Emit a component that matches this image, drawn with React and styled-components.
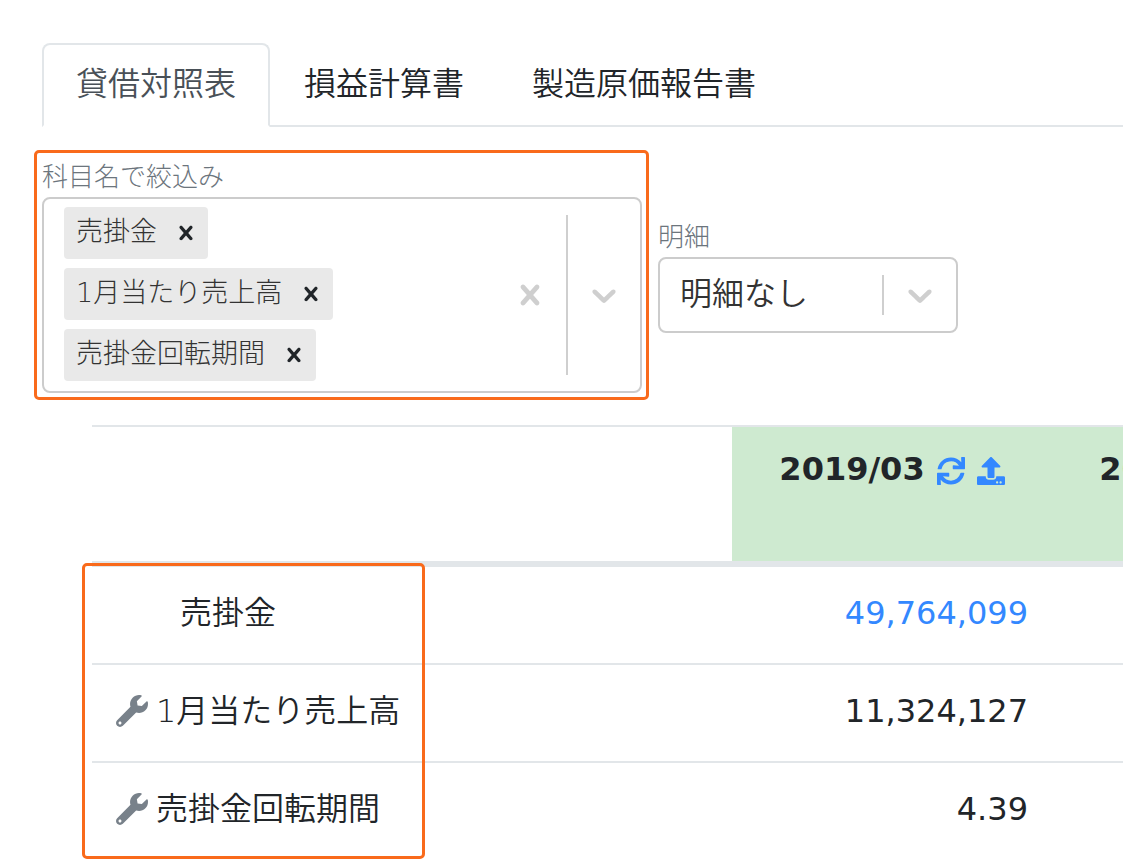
import React, { useState } from 'react';
import styled, { createGlobalStyle } from 'styled-components';
import { FaSync, FaUpload, FaWrench } from 'react-icons/fa';

const GlobalStyle = createGlobalStyle`
  *, *::before, *::after {
    box-sizing: border-box;
  }

  body {
    margin: 0;
    background: #ffffff;
    color: #212529;
    font-family: 'DejaVu Sans', 'Noto Sans CJK JP', sans-serif;
    font-size: 32px;
    font-weight: 350;
    line-height: 48px;
  }

  button, input, select {
    font: inherit;
    color: inherit;
  }
`;

const Page = styled.main`
  padding-top: 43px;
  overflow: hidden;
`;

const TabList = styled.div`
  display: flex;
  margin: 0 0 32px 42px;
  box-shadow: inset 0 -2px 0 #e2e6e9;
`;

const Tab = styled.button`
  height: 84px;
  padding: 0 32px 2px;
  border: 2px solid ${props => (props.$active ? '#e2e6e9' : 'transparent')};
  border-bottom-color: ${props => (props.$active ? '#ffffff' : 'transparent')};
  border-radius: 8px 8px 0 0;
  background: ${props => (props.$active ? '#ffffff' : 'transparent')};
  color: ${props => (props.$active ? '#495057' : '#212529')};
  white-space: nowrap;
  cursor: pointer;
`;

const Filters = styled.div`
  display: flex;
  align-items: center;
  gap: 16px;
  margin-bottom: 32px;
  padding-left: 42px;
`;

const Field = styled.div`
  position: relative;
  flex: 0 1 ${props => props.$width};
  min-width: 0;
`;

const FieldLabel = styled.label`
  display: block;
  padding-bottom: 2px;
  color: #6c757d;
  font-size: 26px;
  font-weight: 300;
  line-height: 36px;
`;

const Control = styled.div`
  position: relative;
  display: flex;
  border: 2px solid #cccccc;
  border-radius: 8px;
  background: #ffffff;
`;

const Values = styled.div`
  display: flex;
  flex: 1;
  align-items: flex-end;
  min-width: 0;
  padding: 8px 0 10px 20px;
`;

const TagList = styled.ul`
  display: flex;
  flex-direction: column;
  align-items: flex-start;
  gap: 9px;
  margin: 0;
  padding: 0;
  list-style: none;
`;

const Tag = styled.li`
  display: flex;
  height: 52px;
  border-radius: 4px;
  background: #e9e9e9;
  color: #333333;
  font-size: 27px;
  font-weight: 300;
  line-height: 50px;
  white-space: nowrap;
`;

const TagText = styled.span`
  padding: 0 6px 0 12px;
`;

const TagRemove = styled.button`
  display: flex;
  align-items: center;
  justify-content: center;
  width: 45px;
  padding: 0;
  border: 0;
  background: none;
  color: #212529;
  cursor: pointer;
`;

const SearchInput = styled.input`
  flex: 1;
  width: 0;
  min-width: 0;
  height: 52px;
  padding: 0 8px;
  border: 0;
  outline: 0;
  background: none;
`;

const Indicator = styled.button`
  display: flex;
  align-items: center;
  justify-content: center;
  width: 72px;
  padding: 0;
  border: 0;
  background: none;
  color: #cfcfcf;
  cursor: pointer;
`;

const Separator = styled.span`
  width: 2px;
  margin: 16px 0;
  background: #cfcfcf;
`;

const Select = styled.select`
  appearance: none;
  width: 100%;
  height: 72px;
  padding: 0 92px 2px 20px;
  border: 0;
  outline: 0;
  background: none;
  color: #333333;
`;

// sits over the right end of the native select
const SelectIndicators = styled.div`
  position: absolute;
  inset: 0 0 0 auto;
  display: flex;
  color: #cfcfcf;
  pointer-events: none;
`;

const IndicatorIcon = styled.span`
  display: flex;
  align-items: center;
  justify-content: center;
  width: 72px;
`;

const Icon = styled.svg`
  width: ${props => props.$size};
  height: ${props => props.$size};
  fill: currentColor;
`;

const Highlight = styled.div`
  position: absolute;
  inset: ${props => props.$inset};
  width: ${props => props.$width};
  border: 3px solid #f96a1b;
  border-radius: 5px;
  pointer-events: none;
`;

const TableArea = styled.div`
  position: relative;
  margin-left: 92px;
`;

const TableScroll = styled.div`
  overflow-x: auto;
  scrollbar-width: none;
`;

const Table = styled.table`
  width: 1280px;
  border-collapse: separate;
  border-spacing: 0;
  table-layout: fixed;
`;

const HeadCell = styled.th`
  width: ${props => props.$width};
  height: 142px;
  padding: 18px 24px;
  border-top: 2px solid #e2e6e9;
  border-bottom: 6px solid #e2e6e9;
  background: ${props => (props.$period ? '#ceead0' : 'transparent')};
  font-weight: 700;
  vertical-align: top;
`;

const Period = styled.div`
  display: flex;
  align-items: center;
  justify-content: center;
  gap: 12px;
`;

const IconButton = styled.button`
  display: flex;
  padding: 4px 0 0;
  border: 0;
  background: none;
  color: #3388ff;
  font-size: 28px;
  cursor: pointer;
`;

const Row = styled.tr`
  & + & > * {
    border-top: 2px solid #e2e6e9;
  }
`;

const AccountCell = styled.th`
  padding: 22px 24px 26px ${props => (props.$indent ? '88px' : '24px')};
  font-weight: 350;
  text-align: left;
`;

const Account = styled.span`
  display: flex;
  align-items: center;
  gap: 8px;

  svg {
    color: #78818a;
  }
`;

const AmountCell = styled.td`
  padding: 22px 24px 26px;
  font-weight: 400;
  text-align: right;

  a {
    color: #3388ff;
    text-decoration: none;
  }
`;

const CrossIcon = ({ size }) => (
  <Icon $size={size} viewBox="0 0 20 20" aria-hidden="true">
    <path d="M14.348 14.849c-0.469 0.469-1.229 0.469-1.697 0l-2.651-3.030-2.651 3.029c-0.469 0.469-1.229 0.469-1.697 0-0.469-0.469-0.469-1.229 0-1.697l2.758-3.15-2.759-3.152c-0.469-0.469-0.469-1.228 0-1.697s1.228-0.469 1.697 0l2.652 3.031 2.651-3.031c0.469-0.469 1.228-0.469 1.697 0s0.469 1.229 0 1.697l-2.758 3.152 2.758 3.15c0.469 0.469 0.469 1.229 0 1.698z" />
  </Icon>
);

const ChevronIcon = () => (
  <Icon $size="40px" viewBox="0 0 20 20" aria-hidden="true">
    <path d="M4.516 7.548c0.436-0.446 1.043-0.481 1.576 0l3.908 3.747 3.908-3.747c0.533-0.481 1.141-0.446 1.574 0 0.436 0.445 0.408 1.197 0 1.615-0.406 0.418-4.695 4.502-4.695 4.502-0.217 0.223-0.502 0.335-0.787 0.335s-0.57-0.112-0.789-0.335c0 0-4.287-4.084-4.695-4.502s-0.436-1.17 0-1.615z" />
  </Icon>
);

const tabs = ['貸借対照表', '損益計算書', '製造原価報告書'];

const periods = ['2019/03', '2020/03'];

const rows = [
  { name: '売掛金', amount: '49,764,099', linked: true },
  { name: '1月当たり売上高', amount: '11,324,127', custom: true },
  { name: '売掛金回転期間', amount: '4.39', custom: true },
];

const App = () => {
  const [activeTab, setActiveTab] = useState(tabs[0]);
  const [accounts, setAccounts] = useState(rows.map(row => row.name));

  return (
    <Page>
      <GlobalStyle />
      <TabList role="tablist">
        {tabs.map(tab => (
          <Tab
            key={tab}
            type="button"
            role="tab"
            aria-selected={tab === activeTab}
            $active={tab === activeTab}
            onClick={() => setActiveTab(tab)}
          >
            {tab}
          </Tab>
        ))}
      </TabList>

      <Filters>
        <Field $width="600px">
          <FieldLabel htmlFor="account-filter">科目名で絞込み</FieldLabel>
          <Control>
            <Values>
              <TagList>
                {accounts.map(name => (
                  <Tag key={name}>
                    <TagText>{name}</TagText>
                    <TagRemove
                      type="button"
                      aria-label={name}
                      onClick={() => setAccounts(accounts.filter(item => item !== name))}
                    >
                      <CrossIcon size="28px" />
                    </TagRemove>
                  </Tag>
                ))}
              </TagList>
              <SearchInput id="account-filter" type="text" autoComplete="off" />
            </Values>
            <Indicator type="button" onClick={() => setAccounts([])}>
              <CrossIcon size="40px" />
            </Indicator>
            <Separator />
            <Indicator type="button">
              <ChevronIcon />
            </Indicator>
          </Control>
          <Highlight $inset="-9px -7px -7px -8px" />
        </Field>

        <Field $width="300px">
          <FieldLabel htmlFor="detail">明細</FieldLabel>
          <Control>
            <Select id="detail">
              <option>明細なし</option>
            </Select>
            <SelectIndicators>
              <Separator />
              <IndicatorIcon>
                <ChevronIcon />
              </IndicatorIcon>
            </SelectIndicators>
          </Control>
        </Field>
      </Filters>

      <TableArea>
        <TableScroll>
          <Table>
            <thead>
              <tr>
                <HeadCell as="td" $width="640px" />
                {periods.map(period => (
                  <HeadCell key={period} scope="col" $width="320px" $period>
                    <Period>
                      {period}
                      <IconButton type="button">
                        <FaSync />
                      </IconButton>
                      <IconButton type="button">
                        <FaUpload />
                      </IconButton>
                    </Period>
                  </HeadCell>
                ))}
              </tr>
            </thead>
            <tbody>
              {rows.map(row => (
                <Row key={row.name}>
                  <AccountCell scope="row" $indent={!row.custom}>
                    <Account>
                      {row.custom && <FaWrench />}
                      {row.name}
                    </Account>
                  </AccountCell>
                  <AmountCell>{row.linked ? <a href="#detail">{row.amount}</a> : row.amount}</AmountCell>
                  <AmountCell />
                </Row>
              ))}
            </tbody>
          </Table>
        </TableScroll>
        <Highlight $inset="138px auto 0 -10px" $width="343px" />
      </TableArea>
    </Page>
  );
};

export default App;
